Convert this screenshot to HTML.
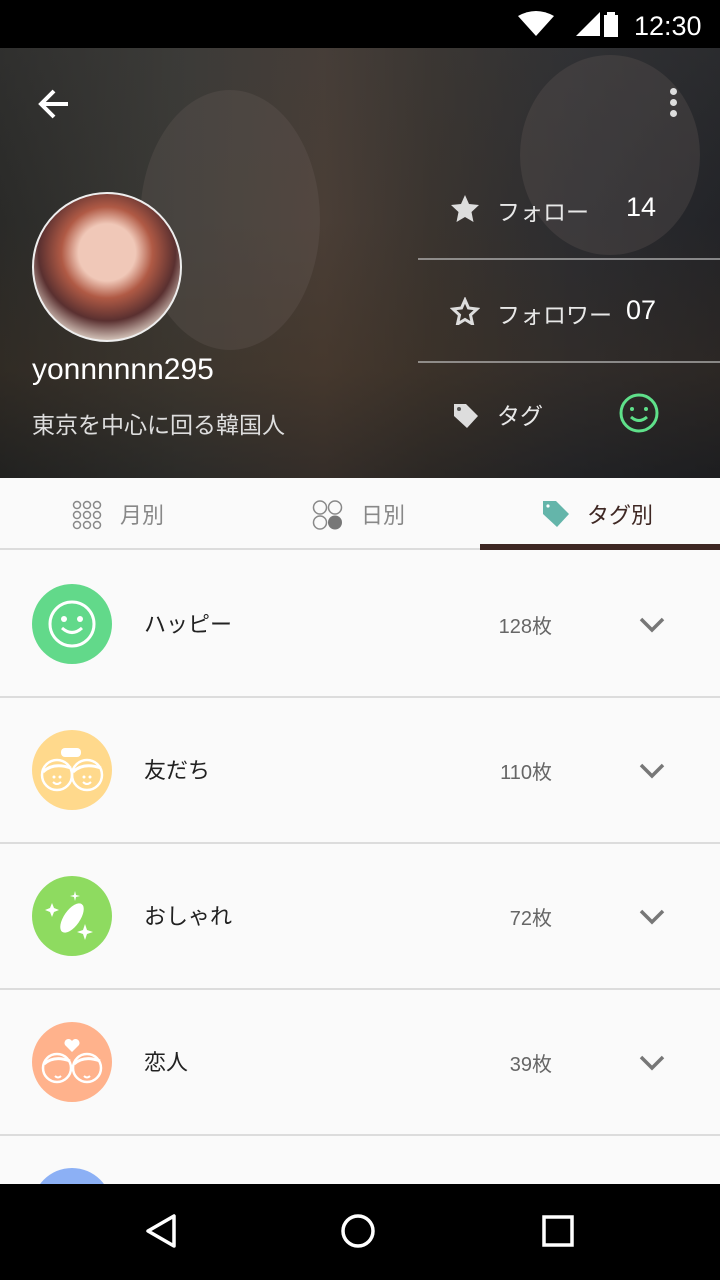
<!DOCTYPE html>
<html><head><meta charset="utf-8"><style>
*{margin:0;padding:0;box-sizing:border-box}
body{width:720px;height:1280px;overflow:hidden;background:#fafafa;font-family:"Liberation Sans","Noto Sans CJK JP",sans-serif;position:relative}
.abs{position:absolute}
.row{position:absolute;left:0;width:720px;height:146px;border-bottom:2px solid #dcdcdc}
.row .name{position:absolute;left:144px;top:55px;font-size:22px;color:#212121}
.row .cnt{position:absolute;top:58px;font-size:20px;color:#666;text-align:right;right:168px}
.row svg.chev{position:absolute;left:638px;top:64px}
.row .ic{position:absolute;left:32px;top:32px;width:80px;height:80px;border-radius:50%}
</style></head><body>
<div class="abs" style="top:0;left:0;width:720px;height:48px;background:#000"></div>
<svg class="abs" style="left:516px;top:10px" width="200" height="30">
<path d="M2 6 Q20 -4 38 6 L20 26Z" fill="#fff"/>
<path d="M60 26 L84 2 L84 26Z" fill="#fff"/>
<rect x="88" y="5" width="14" height="22" fill="#fff"/><rect x="91" y="2" width="8" height="4" fill="#fff"/>
<text x="118" y="25" font-size="27" fill="#fff" font-family="Liberation Sans">12:30</text></svg>
<div class="abs" style="top:48px;left:0;width:720px;height:430px;background:linear-gradient(90deg,#2a2a28 0%,#3b3a36 25%,#4a3e36 45%,#3a342f 60%,#2b2c30 80%,#232428 100%)"></div>
<div class="abs" style="top:48px;left:0;width:720px;height:430px;background:linear-gradient(180deg,rgba(60,60,60,.3),rgba(0,0,0,0) 40%,rgba(60,45,30,.35) 75%,rgba(20,20,20,.4))"></div>
<div class="abs" style="top:90px;left:140px;width:180px;height:260px;border-radius:50%;background:rgba(110,100,95,.25)"></div>
<div class="abs" style="top:55px;left:520px;width:180px;height:200px;border-radius:50%;background:rgba(110,100,95,.25)"></div>
<svg class="abs" style="left:36px;top:86px" width="36" height="36"><path d="M32 18H6M18 5L5 18 18 31" stroke="#fff" stroke-width="4" fill="none"/></svg>
<div class="abs" style="left:670px;top:88px;width:7px;height:7px;border-radius:50%;background:#ddd;box-shadow:0 11px 0 #ddd,0 22px 0 #ddd"></div>
<div class="abs" style="left:32px;top:192px;width:150px;height:150px;border-radius:50%;background:radial-gradient(circle at 50% 40%,#f0c8b8 0 25%,#b05a45 40%,#5a3030 60%,#e8dcd0 80%);border:2px solid #eee"></div>
<div class="abs" style="left:32px;top:353px;font-size:30px;color:#fff">yonnnnnn295</div>
<div class="abs" style="left:32px;top:406px;font-size:23px;color:#ddd">東京を中心に回る韓国人</div>
<svg class="abs" style="left:450px;top:194px" width="30" height="28"><path d="M15 1l4 9 10 1-7.5 7 2 10L15 23l-8.5 5 2-10L1 11l10-1z" fill="#ddd"/></svg>
<div class="abs" style="left:497px;top:193px;font-size:23px;color:#e8e8e8">フォロー</div>
<div class="abs" style="left:626px;top:192px;font-size:27px;color:#fff">14</div>
<div class="abs" style="left:418px;top:258px;width:302px;height:2px;background:rgba(200,200,200,.6)"></div>
<svg class="abs" style="left:450px;top:297px" width="30" height="28"><path d="M15 3l3.5 8 8.5 1-6.5 6 2 9L15 22.5 7.5 27l2-9L3 12l8.5-1z" fill="none" stroke="#ddd" stroke-width="3"/></svg>
<div class="abs" style="left:497px;top:296px;font-size:23px;color:#e8e8e8">フォロワー</div>
<div class="abs" style="left:626px;top:295px;font-size:27px;color:#fff">07</div>
<div class="abs" style="left:418px;top:361px;width:302px;height:2px;background:rgba(200,200,200,.6)"></div>
<svg class="abs" style="left:452px;top:402px" width="28" height="28"><path d="M2 2h12l12 12-11 12L2 14z" fill="#ddd"/><circle cx="7" cy="7" r="2" fill="#555"/></svg>
<div class="abs" style="left:497px;top:397px;font-size:23px;color:#e8e8e8">タグ</div>
<svg class="abs" style="left:618px;top:392px" width="42" height="42"><circle cx="21" cy="21" r="18" fill="none" stroke="#5fe08a" stroke-width="3"/><circle cx="14" cy="17" r="2" fill="#5fe08a"/><circle cx="28" cy="17" r="2" fill="#5fe08a"/><path d="M13 25q8 7 16 0" stroke="#5fe08a" stroke-width="3" fill="none"/></svg>
<div class="abs" style="top:478px;left:0;width:720px;height:72px;background:#fafafa;border-bottom:2px solid #dcdcdc"></div>
<div class="abs" style="top:544px;left:480px;width:240px;height:6px;background:#3e2723"></div>
<svg class="abs" style="left:72px;top:500px" width="30" height="30"><g fill="none" stroke="#888" stroke-width="1.5"><circle cx="5" cy="5" r="3.5"/><circle cx="15" cy="5" r="3.5"/><circle cx="25" cy="5" r="3.5"/><circle cx="5" cy="15" r="3.5"/><circle cx="15" cy="15" r="3.5"/><circle cx="25" cy="15" r="3.5"/><circle cx="5" cy="25" r="3.5"/><circle cx="15" cy="25" r="3.5"/><circle cx="25" cy="25" r="3.5"/></g></svg>
<div class="abs" style="left:120px;top:498px;font-size:22px;color:#888">月別</div>
<svg class="abs" style="left:312px;top:500px" width="32" height="30"><g stroke="#888" stroke-width="1.5" fill="none"><circle cx="8" cy="7.5" r="6.5"/><circle cx="23" cy="7.5" r="6.5"/><circle cx="8" cy="22.5" r="6.5"/></g><circle cx="23" cy="22.5" r="7" fill="#777"/></svg>
<div class="abs" style="left:361px;top:498px;font-size:22px;color:#888">日別</div>
<svg class="abs" style="left:542px;top:500px" width="28" height="28"><path d="M1 1h13l13 13-12 13L1 14z" fill="#64b5aa"/><circle cx="6" cy="6" r="1.6" fill="#fff"/></svg>
<div class="abs" style="left:587px;top:498px;font-size:22px;color:#3e2723">タグ別</div>

<div class="row" style="top:552px"><div class="ic" style="background:#62d98a"><svg width="80" height="80"><circle cx="40" cy="40" r="22" fill="none" stroke="#fff" stroke-width="3"/><circle cx="32" cy="35" r="3" fill="#fff"/><circle cx="48" cy="35" r="3" fill="#fff"/><path d="M30 44q10 9 20 0" stroke="#fff" stroke-width="3" fill="none"/></svg></div><div class="name">ハッピー</div><div class="cnt">128枚</div><svg class="chev" width="28" height="18"><path d="M3 3l11 11 11-11" stroke="#777" stroke-width="3.5" fill="none"/></svg></div>
<div class="row" style="top:698px"><div class="ic" style="background:#ffd98c"><svg width="80" height="80"><g fill="none" stroke="#fff" stroke-width="2.5"><circle cx="25" cy="45" r="15"/><circle cx="55" cy="45" r="15"/></g><path d="M11 42q10-10 28-4M41 42q10-10 28-4" stroke="#fff" stroke-width="3" fill="none"/><rect x="29" y="18" width="20" height="9" rx="4" fill="#fff"/><circle cx="22" cy="47" r="1.5" fill="#fff"/><circle cx="28" cy="47" r="1.5" fill="#fff"/><circle cx="52" cy="47" r="1.5" fill="#fff"/><circle cx="58" cy="47" r="1.5" fill="#fff"/><path d="M21 52q4 4 8 0M51 52q4 4 8 0" stroke="#fff" stroke-width="2" fill="none"/></svg></div><div class="name">友だち</div><div class="cnt">110枚</div><svg class="chev" width="28" height="18"><path d="M3 3l11 11 11-11" stroke="#777" stroke-width="3.5" fill="none"/></svg></div>
<div class="row" style="top:844px"><div class="ic" style="background:#8edb60"><svg width="80" height="80"><ellipse cx="40" cy="42" rx="8" ry="17" transform="rotate(35 40 42)" fill="#fff"/><path d="M20 27l2 5 5 2-5 2-2 5-2-5-5-2 5-2z" fill="#fff"/><path d="M43 15l1 4 4 1-4 1-1 4-1-4-4-1 4-1z" fill="#fff"/><path d="M53 48l2 6 6 2-6 2-2 6-2-6-6-2 6-2z" fill="#fff"/></svg></div><div class="name">おしゃれ</div><div class="cnt">72枚</div><svg class="chev" width="28" height="18"><path d="M3 3l11 11 11-11" stroke="#777" stroke-width="3.5" fill="none"/></svg></div>
<div class="row" style="top:990px"><div class="ic" style="background:#ffb28c"><svg width="80" height="80"><g fill="none" stroke="#fff" stroke-width="2.5"><circle cx="25" cy="46" r="14"/><circle cx="55" cy="46" r="14"/></g><path d="M12 42q10-9 26-3M42 42q10-9 26-3" stroke="#fff" stroke-width="3" fill="none"/><path d="M40 30l-7-7a4 4 0 0 1 7-4 4 4 0 0 1 7 4z" fill="#fff"/><path d="M23 54q3 3 6 0M52 54q3 3 6 0" stroke="#fff" stroke-width="2" fill="none"/></svg></div><div class="name">恋人</div><div class="cnt">39枚</div><svg class="chev" width="28" height="18"><path d="M3 3l11 11 11-11" stroke="#777" stroke-width="3.5" fill="none"/></svg></div>
<div class="abs" style="left:32px;top:1168px;width:80px;height:80px;border-radius:50%;background:#8cb0f5"></div>
<div class="abs" style="top:1184px;left:0;width:720px;height:96px;background:#000"></div>
<svg class="abs" style="left:0;top:1184px" width="720" height="96"><path d="M174 32v30L148 47z" fill="none" stroke="#fff" stroke-width="3.5" stroke-linejoin="round"/><circle cx="358" cy="47" r="15" fill="none" stroke="#fff" stroke-width="3.5"/><rect x="544" y="33" width="28" height="28" fill="none" stroke="#fff" stroke-width="3.5"/></svg>
</body></html>
